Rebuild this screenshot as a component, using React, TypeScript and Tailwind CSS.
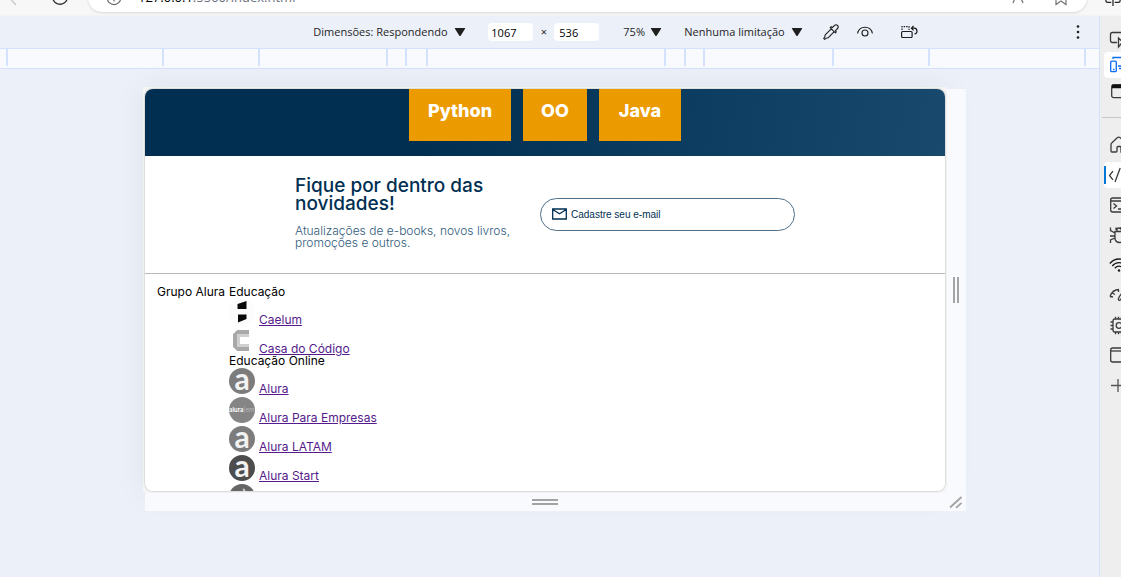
import React, { useState } from 'react';

const CaretDown: React.FC = () => (
  <svg viewBox="0 0 12 10" className="w-3 h-[10px] shrink-0 pointer-events-none" fill="#1f1f1f" aria-hidden="true">
    <path d="M1.4 1h9.2q.8 0 .4.8L6.8 8.6q-.8 1-1.6 0L1 1.8Q.6 1 1.4 1z" />
  </svg>
);

const MEDIA_SEGMENTS = [
  'w-[156px]', 'w-[96px]', 'w-[128px]', 'w-[19px]', 'w-[21px]', 'w-[238px]',
  'w-[20px]', 'w-[19px]', 'w-[129px]', 'w-[96px]', 'w-[156px]',
];

const BrowserBar: React.FC = () => (
  <header className="h-4 shrink-0 bg-[#f7f7f7] flex items-end overflow-hidden border-b border-[#f3f3f3] pb-[3px]">
    <button aria-label="Voltar" className="w-7 h-7 shrink-0 flex items-center justify-center">
      <svg viewBox="0 0 16 16" className="w-4 h-4" fill="none" stroke="#c4c4c4" strokeWidth="1.2"><path d="M10 2 4 8.500 10 15" /></svg>
    </button>
    <button aria-label="Atualizar" className="w-[60px] h-7 pl-1 shrink-0 flex items-center justify-center">
      <svg viewBox="0 0 18 18" className="w-[18px] h-[18px]" fill="none" stroke="#333" strokeWidth="1.4"><path d="M15.5 4A7.500 7.500 0 1 0 16.500 7.500M16 0v4.500h-4.500" /></svg>
    </button>
    <div className="flex-1 h-7 bg-white rounded-full shadow-sm flex items-center pl-[18px] pr-[18px]">
      <svg viewBox="0 0 18 18" className="w-4 h-[18px] mr-4" fill="none" stroke="#666" strokeWidth="1.3"><circle cx="9" cy="9" r="7.500" /><path d="M9 8v5M9 5v1.300" /></svg>
      <span className="text-[13px] text-gray-500 flex-1"><span className="text-black">127.0.0.1</span>:5500/index.html</span>
      <svg viewBox="0 0 16 16" className="w-4 h-4 mr-[26px]" fill="none" stroke="#777" strokeWidth="1.3"><path d="M2 13 7 1l5 12M4 9h6" /></svg>
      <svg viewBox="0 0 16 16" className="w-4 h-4" fill="none" stroke="#777" strokeWidth="1.2"><path d="M3 1h10v13.500l-5-3.500-5 3.500z" /></svg>
    </div>
    <button aria-label="Tela dividida" className="w-[34px] h-7 shrink-0 flex items-center justify-end">
      <svg viewBox="0 0 18 18" className="w-4 h-[18px]" fill="none" stroke="#222" strokeWidth="1.4"><path d="M9 0v18M7 2H3Q1 2 1 4v8q0 2 2 2h4M11 2h4q2 0 2 2v8q0 2-2 2h-4" /></svg>
    </button>
  </header>
);

const DeviceToolbar: React.FC = () => {
  const [width, setWidth] = useState('1067');
  const [height, setHeight] = useState('536');

  return (
    <div className="h-8 flex items-center text-[11px] text-[#1f1f1f]">
      <div className="grow-[2]" />
      <label className="flex items-center">
        <select aria-label="Dimensões" className="appearance-none bg-transparent w-[141px] outline-none">
          <option>Dimensões: Respondendo</option>
        </select>
        <CaretDown />
      </label>
      <input aria-label="Largura" value={width} onChange={e => setWidth(e.target.value)} className="ml-[22px] w-[45px] h-[18px] bg-white rounded-sm pl-[3px] text-black outline-none" />
      <span className="w-[21px] text-center pt-px">×</span>
      <input aria-label="Altura" value={height} onChange={e => setHeight(e.target.value)} className="w-[45px] h-[18px] bg-white rounded-sm pl-[5px] text-black outline-none" />
      <label className="ml-6 flex items-center">
        <select aria-label="Zoom" className="appearance-none bg-transparent w-[27px] outline-none">
          <option>75%</option>
        </select>
        <CaretDown />
      </label>
      <label className="ml-[22px] flex items-center">
        <select aria-label="Limitação de rede" className="appearance-none bg-transparent w-[107px] outline-none">
          <option>Nenhuma limitação</option>
        </select>
        <CaretDown />
      </label>
      <button aria-label="Conta-gotas" className="ml-5">
        <svg viewBox="0 0 16 16" className="w-4 h-4" fill="none" stroke="#1f1f1f" strokeWidth="1.100" strokeLinejoin="round">
          <path d="M8.300 4.800 2.200 10.900 1.700 13.200.7 14.300l1 1 1.200-1 2.200-.5 6.100-6.100M7.200 3.700l5.100 5.100 1-1-1-1 2.200-2.300a1.900 1.900 0 0 0-3-3L9.200 3.700l-1-1z" />
        </svg>
      </button>
      <button aria-label="Emular visão" className="ml-[18px]">
        <svg viewBox="0 0 16 16" className="w-4 h-4" fill="none" stroke="#1f1f1f" strokeWidth="1.100">
          <path d="M.6 9.500C1.300 5.600 4.300 3.200 8 3.200s6.700 2.400 7.400 6.300" />
          <circle cx="8" cy="9" r="3" />
        </svg>
      </button>
      <button aria-label="Girar" className="ml-7">
        <svg viewBox="0 0 17 16" className="w-[17px] h-4" fill="none" stroke="#1f1f1f" strokeWidth="1.200">
          <rect x=".6" y="7.500" width="10.500" height="6" rx="1" />
          <path d="M1 6V2.600h7V6" strokeDasharray="1.500 1" />
          <path d="M10.500 4.200h2.800q2.700.3 2.700 3 0 2.200-2.500 2.800M12.600 2l-2.200 2.200 2.200 2.200" />
        </svg>
      </button>
      <div className="grow flex justify-end pr-[18px]">
        <button aria-label="Mais opções" className="w-[6px]">
          <svg viewBox="0 0 6 16" className="w-[6px] h-4" fill="#1f1f1f"><circle cx="3" cy="2.500" r="1.300" /><circle cx="3" cy="8" r="1.300" /><circle cx="3" cy="13.500" r="1.300" /></svg>
        </button>
      </div>
    </div>
  );
};

const MediaBar: React.FC = () => (
  <div className="h-[21px] bg-[#f8fafe] border-y border-[#d3e3fd] flex justify-center pb-[2px] pr-[7px] overflow-hidden">
    {MEDIA_SEGMENTS.map((w, i) => (
      <div key={i} className={`${w} shrink-0 border-l-2 border-[#d3e3fd]`} />
    ))}
    <div className="w-[2px] shrink-0 bg-[#d3e3fd]" />
  </div>
);

const Logo: React.FC<{ kind: string }> = ({ kind }) => {
  if (kind === 'caelum') {
    return (
      <svg viewBox="0 0 26 26" className="w-[26px] h-[26px]" aria-hidden="true">
        <circle cx="13" cy="13" r="13" fill="#fcfcfc" />
        <path d="M8.500 5 17.500 2v8h-9zM9 15.500h8.500v4.500l-8.500 3.500z" fill="#0a0a0a" />
      </svg>
    );
  }
  if (kind === 'casa') {
    return (
      <svg viewBox="0 0 26 26" className="w-[26px] h-[26px]" aria-hidden="true">
        <path d="M20 4H9L6 7v11l3 3h11" fill="none" stroke="#a8a8a8" strokeWidth="4" />
        <path d="M20 7.500H9.500v10H20" fill="none" stroke="#cfcfcf" strokeWidth="3" />
      </svg>
    );
  }
  if (kind === 'empresas') {
    return (
      <span className="w-[26px] h-[26px] rounded-full bg-[#858585] text-white text-[6px] font-semibold flex items-center overflow-hidden">
        alura<span className="font-normal opacity-40">|em</span>
      </span>
    );
  }
  if (kind === 'lingua') {
    return (
      <svg viewBox="0 0 26 26" className="w-[26px] h-[26px]" aria-hidden="true">
        <circle cx="13" cy="13" r="13" fill="#666" />
        <path d="M14 5q3 2 1 7" fill="none" stroke="#ccc" strokeWidth="2" />
      </svg>
    );
  }
  return (
    <span className={`w-[26px] h-[26px] rounded-full text-[#f2f2f2] text-3xl leading-5 font-bold text-center pb-[6px] font-['Lato',sans-serif] ${kind === 'start' ? 'bg-[#4d4d4d]' : 'bg-[#7c7c7c]'}`}>
      a
    </span>
  );
};

const GROUPS = [
  {
    title: 'Educação',
    items: [
      { kind: 'caelum', name: 'Caelum' },
      { kind: 'casa', name: 'Casa do Código' },
    ],
  },
  {
    title: 'Educação Online',
    items: [
      { kind: 'alura', name: 'Alura' },
      { kind: 'empresas', name: 'Alura Para Empresas' },
      { kind: 'latam', name: 'Alura LATAM' },
      { kind: 'start', name: 'Alura Start' },
      { kind: 'lingua', name: 'Alura Língua' },
    ],
  },
];

const BookPage: React.FC = () => (
  <div className="font-['Inter',sans-serif] bg-white">
    <nav className="h-[67px] bg-[linear-gradient(97.54deg,#002F52_35.49%,#326589_165.37%)] flex justify-center items-start gap-3 text-lg font-extrabold text-white">
      <a href="#python" className="w-[102px] h-[52px] pt-2 bg-[#eb9b00] text-center">Python</a>
      <a href="#oo" className="w-[64px] h-[52px] pt-2 bg-[#eb9b00] text-center">OO</a>
      <a href="#java" className="w-[82px] h-[52px] pt-2 bg-[#eb9b00] text-center">Java</a>
    </nav>

    <section className="h-[118px] border-b border-[#b8b8b8] flex justify-center items-center text-[#002f52]">
      <div className="w-[245px] pb-1">
        <h2 className="text-[19px] leading-[18px] font-medium whitespace-nowrap">Fique por dentro das<br />novidades!</h2>
        <p className="mt-3 text-xs leading-3 font-light text-[#2f5b7c] whitespace-nowrap">Atualizações de e-books, novos livros,<br />promoções e outros.</p>
      </div>
      <label className="w-[255px] h-[33px] border border-[#4d6f8a] rounded-full flex items-center pl-[11px] pr-4 -mt-px">
        <svg viewBox="0 0 15 12" className="w-[15px] h-3 mr-1 shrink-0" fill="none" stroke="#002f52" strokeWidth="1.300" aria-hidden="true">
          <path d="M.7 1h13.600v10H.7zM.7 1.500l6.800 4.300 6.800-4.300" />
        </svg>
        <input type="email" aria-label="Cadastre seu e-mail" placeholder="Cadastre seu e-mail" className="w-full min-w-0 font-['Liberation_Sans',sans-serif] text-[10px] placeholder:text-[#002f52] outline-none" />
      </label>
    </section>

    <footer className="flex p-3 text-xs leading-3 text-black">
      <h3 className="w-[72px] whitespace-nowrap">Grupo Alura</h3>
      <div>
        {GROUPS.map(group => (
          <section key={group.title}>
            <h4>{group.title}</h4>
            <ul className="flex flex-col gap-px">
              {group.items.map(item => (
                <li key={item.name} className="h-7 flex items-end gap-1 whitespace-nowrap">
                  <span className="flex pb-px"><Logo kind={item.kind} /></span>
                  <a href="#grupo" className="text-[#551a8b] underline">{item.name}</a>
                </li>
              ))}
            </ul>
          </section>
        ))}
      </div>
    </footer>
  </div>
);

const DeviceCanvas: React.FC = () => (
  <div className="flex-1 flex justify-center items-start pt-5 pl-3">
    <div className="w-full max-w-[821px]">
      <div className="flex">
        <div className="flex-1 min-w-0 shadow-[0_0_32px_rgba(0,0,0,0.07)]">
          <div className="relative z-10 bg-[#f5f5f5] shadow-[0_0_0_2px_#f5f5f5]">
            <div className="h-[402px] overflow-hidden rounded-lg bg-white shadow-[0_0_2px_rgba(0,0,0,0.35)]">
              <BookPage />
            </div>
          </div>
        </div>
        <div className="relative w-[21px] bg-[#f8fafe] flex items-center justify-center">
          <div className="w-[6px] h-[26px] border-x-2 border-[#a3a3a3]" />
        </div>
      </div>
      <div className="relative h-5 pt-px bg-[#f8fafe] flex items-center">
        <div className="flex-1 flex justify-center"><div className="w-[26px] h-[6px] border-y-2 border-[#a3a3a3]" /></div>
        <div className="w-[21px] flex justify-center">
          <svg viewBox="0 0 14 14" className="w-[14px] h-[14px]" stroke="#a3a3a3" strokeWidth="1.800" aria-hidden="true"><path d="M1 12.500 12.500 2M7 12.800l5.500-5" /></svg>
        </div>
      </div>
    </div>
  </div>
);

const Tool: React.FC<{ label: string; active?: 'device' | 'elements'; short?: boolean; children: React.ReactNode }> = ({ label, active, short, children }) => (
  <button aria-label={label} className={`${short ? 'h-[26px]' : 'h-[30px]'} w-full flex items-center shrink-0`}>
    <span className={`h-[26px] w-full flex items-center ${active ? 'bg-white rounded-l-sm' : ''} ${active === 'elements' ? 'pl-0' : 'pl-[5px]'}`}>
      {active === 'elements' && <span className="w-[2px] h-[18px] mr-[2px] shrink-0 bg-[#0078d4]" />}
      <svg viewBox="0 0 20 20" className="w-5 h-5 shrink-0" fill="none" stroke={active === 'device' ? '#0b6cf5' : '#3a3a3a'} strokeWidth="1.300">{children}</svg>
    </span>
  </button>
);

const ActivityBar: React.FC = () => (
  <aside className="w-[22px] shrink-0 bg-[#eee] border-l border-[#d3e3fd] overflow-hidden pl-1 pt-[10px]">
    <Tool label="Inspecionar" short><path d="M8 13.500H3.500q-2 0-2-2V5.500q0-2 2-2h13q2 0 2 2V9M9.500 9v9l2.500-3h4z" /></Tool>
    <Tool label="Emulação de dispositivo" active="device" short><rect x="1.700" y="6.200" width="5.600" height="10.500" rx="1" /><path d="M4 14.500h1.500M4 4V2.500h14v11H10M9 11h9" /></Tool>
    <Tool label="Boas-vindas" short><rect x="2.700" y="3.700" width="15" height="13" rx="2" /><path d="M3 5.500h15" stroke="#111" strokeWidth="3.500" /></Tool>
    <div className="h-px bg-[#c6c6c6] mt-[13px] mb-3 -ml-[2px]" />
    <Tool label="Página inicial"><path d="M2 9.500Q2 8.500 3 7.700L8.500 2.600q1.200-1 2.400 0L17 7.700V17h-5v-4.500q0-1-1-1H9q-1 0-1 1V16q0 1-1 1H3q-1 0-1-1z" /></Tool>
    <Tool label="Elementos" active="elements"><path d="M5 6.200 1.500 10.500 5 14.800M12.200 3 7 17M15 6l4 4-4 4" /></Tool>
    <Tool label="Console"><rect x="1.700" y="3" width="17" height="14" rx="2" /><path d="M2 6h16M4.500 8.500l3 2.500-3 2.500M9 14h5" /></Tool>
    <Tool label="Fontes"><path d="M6 6.500h9v7q-1 4-4.500 4T6 14zM8 6V4.500Q8 3 10 3t2.500 2M1.500 2.500v3L6 8M1 11h5M1.500 18v-3L6 13M7 5V2.500M12 4V2" /></Tool>
    <Tool label="Rede"><path d="M.8 8.500Q4.500 4 10 4t9.200 4.500M3.200 11Q6 7.700 10 7.700t6.800 3.300M5.800 13.200q1.800-2 4.200-2t4.200 2" stroke="#1a1a1a" /><circle cx="10" cy="15.500" r="1.200" fill="#1a1a1a" stroke="none" /></Tool>
    <Tool label="Desempenho"><path d="M1 11.500Q3.500 4.500 10 4.500M1 11.500l3 .5M3 8l3 1.500M9.500 4.500V7M16 5q-6 5.500-6.700 9 .6 2.200 2.400.7Q13.500 11 16 5z" /></Tool>
    <Tool label="Memória"><rect x="4" y="4" width="13" height="13" rx="2" /><circle cx="10" cy="10.500" r="2.800" /><path d="M6.500 4V1.800M9.500 4V1.800M12.500 4V1.800M6.500 17v2.200M9.500 17v2.200M12.500 17v2.200M4 7H1.500M4 10.500H1.500M4 14H1.500" /></Tool>
    <Tool label="Aplicativo"><rect x="1.700" y="3" width="17" height="14" rx="2" /><path d="M2 6h16" /></Tool>
    <Tool label="Mais ferramentas"><path d="M2 10.500h15M9 4v13" stroke="#555" /></Tool>
  </aside>
);

const App: React.FC = () => {
  return (
    <div className="min-h-screen bg-[#ebf0f9] flex flex-col overflow-hidden font-['Open_Sans',sans-serif]">
      <BrowserBar />
      <div className="flex-1 flex">
        <main className="flex-1 min-w-0 flex flex-col">
          <DeviceToolbar />
          <MediaBar />
          <DeviceCanvas />
        </main>
        <ActivityBar />
      </div>
    </div>
  );
};

export default App;
